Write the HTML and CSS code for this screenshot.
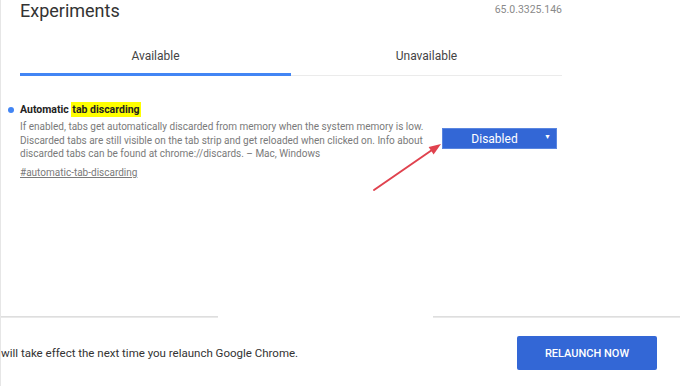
FILE: index.html
```html
<!DOCTYPE html>
<html lang="en">
<head>
    <meta charset="UTF-8">
    <meta name="viewport" content="width=device-width, initial-scale=1.0">
    <title>Experiments</title>
    <link rel="stylesheet" href="styles.css">
</head>
<body>
    <div class="main">
        <!-- Header -->
        <div class="header">
            <h1>Experiments</h1>
            <span class="version">65.0.3325.146</span>
        </div>

        <!-- Tabs -->
        <div class="tabs">
            <div class="tab active">Available</div>
            <div class="tab">Unavailable</div>
        </div>

        <!-- Experiment -->
        <div class="experiment">
            <div class="exp-text">
                <div class="exp-title"><span class="dot"></span>Automatic <mark>tab discarding</mark></div>
                <p class="exp-desc">If enabled, tabs get automatically discarded from memory when the system memory is low. Discarded tabs are still visible on the tab strip and get reloaded when clicked on. Info about discarded tabs can be found at chrome://discards. – Mac, Windows</p>
                <a class="exp-link" href="#automatic-tab-discarding">#automatic-tab-discarding</a>
            </div>
            <div class="select">
                <span>Disabled</span>
                <span class="caret">▼</span>
            </div>
        </div>

        <svg class="pointer" width="90" height="70" viewBox="0 0 90 70">
            <line x1="13" y1="60" x2="71" y2="20" stroke="#e0424e" stroke-width="2" stroke-linecap="round"/>
            <polygon points="80,14 72.6,24.5 67.6,17.1" fill="#e0424e"/>
        </svg>
    </div>

    <!-- Footer -->
    <div class="footer">
        <div class="footer-edge">
            <span class="edge"></span>
            <span class="edge gap"></span>
            <span class="edge"></span>
        </div>
        <div class="footer-row">
            <span class="footer-msg">will take effect the next time you relaunch Google Chrome.</span>
            <button class="btn">RELAUNCH NOW</button>
        </div>
    </div>
</body>
</html>
```

FILE: styles.css
```css
* {
    margin: 0;
    padding: 0;
    box-sizing: border-box;
    font-family: Roboto, 'Liberation Sans', sans-serif;
}

body {
    display: flex;
    flex-direction: column;
    height: 100vh;
    overflow: hidden;
    background: #ffffff;
    color: #333333;
    border-left: 1px solid #e6e6e6;
}

.main {
    flex: 1;
    position: relative;
    padding-left: 19px;
    width: 561px;
}

.header {
    display: flex;
    justify-content: space-between;
    align-items: flex-start;
}

.header h1 {
    font-size: 18px;
    font-weight: 400;
    color: #333333;
}

.version {
    margin-top: 3px;
    font-size: 10.5px;
    color: #8a8a8a;
}

.tabs {
    display: flex;
    margin-top: 19px;
}

.tab {
    flex: 1;
    text-align: center;
    font-size: 12px;
    color: #444444;
    padding: 9px 0 12px;
    border-bottom: 1px solid #ebebeb;
}

.tab.active {
    padding-bottom: 10px;
    border-bottom: 3px solid #4285f4;
}

.experiment {
    display: flex;
    margin-top: 27px;
}

.exp-text {
    width: 412px;
}

.exp-title {
    font-size: 10.5px;
    font-weight: 700;
    color: #222222;
    line-height: 13px;
}

.exp-title mark {
    background: #ffff00;
    color: #222222;
    padding: 1px 1px;
}

.dot {
    display: inline-block;
    width: 6px;
    height: 6px;
    border-radius: 50%;
    background: #4285f4;
    margin-left: -12px;
    margin-right: 6px;
    vertical-align: 0;
}

.exp-desc {
    margin-top: 4px;
    font-size: 10px;
    line-height: 13.7px;
    color: #7a7a7a;
}

.exp-link {
    display: inline-block;
    margin-top: 0;
    font-size: 10px;
    color: #7a7a7a;
}

.select {
    display: flex;
    align-items: center;
    justify-content: center;
    position: relative;
    margin: 25px 0 0 10px;
    padding-right: 10px;
    width: 115px;
    height: 21px;
    background: #3367d6;
    border: 1px solid #5a86e0;
    color: #ffffff;
    font-size: 12px;
}

.caret {
    position: absolute;
    right: 5px;
    top: 4px;
    font-size: 7px;
}

.pointer {
    position: absolute;
    left: 360px;
    top: 130px;
}

.footer {
    height: 70px;
}

.footer-edge {
    display: flex;
}

.edge {
    flex: 1;
    height: 2px;
    background: #e9e9e9;
    border-top: 1px solid #dedede;
}

.edge.gap {
    flex: 0 0 215px;
    background: #ffffff;
    border-top: none;
}

.edge:first-child {
    flex: 0 0 217px;
}

.footer-row {
    display: flex;
    justify-content: space-between;
    align-items: center;
    padding: 18px 23px 0 0;
}

.footer-msg {
    font-size: 11.5px;
    color: #333333;
}

.btn {
    width: 140px;
    height: 34px;
    background: #3367d6;
    color: #ffffff;
    border: none;
    border-radius: 2px;
    font-size: 11px;
    font-weight: 500;
}
```
